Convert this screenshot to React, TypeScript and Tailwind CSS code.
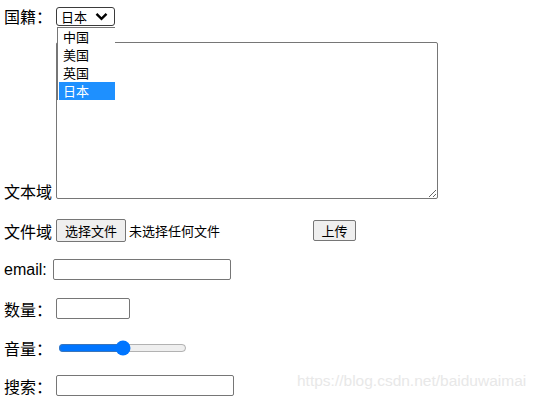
import { useState } from "react";

const font = "font-['Microsoft_YaHei','Noto_Sans_CJK_SC',sans-serif]";

export default function App() {
  const [volume, setVolume] = useState(50);
  const options = ["中国", "美国", "英国", "日本"];

  return (
    <div className={`relative min-h-[404px] overflow-hidden bg-white pl-[4px] pt-[7px] text-black ${font}`}>
      {/* 国籍 */}
      <div className="flex h-[19px] items-center">
        <span className="w-[48px] text-[16px] leading-[19px]">国籍：</span>
        <div className="ml-[4px] flex h-[19px] w-[59px] items-center justify-between rounded-[3px] border border-[#3b3b3b] pl-[4px] pr-[6px] text-[13px] leading-none">
          <span>日本</span>
          <svg width="13" height="9" viewBox="0 0 13 9">
            <path d="M1.5 1.8 L6.5 6.8 L11.5 1.8" fill="none" stroke="#000" strokeWidth="2.4" />
          </svg>
        </div>
      </div>

      {/* 文本域 */}
      <div className="mt-[16px] flex items-end">
        <span className="mb-[-2px] w-[48px] text-[16px] leading-[20px]">文本域</span>
        <textarea className="ml-[4px] block h-[157px] w-[382px] rounded-[2px] border border-[#767676] bg-white p-[2px] text-[13px]" />
      </div>

      {/* 文件域 */}
      <div className="mt-[20px] flex h-[23px] items-center">
        <span className="w-[48px] text-[16px] leading-[20px]">文件域</span>
        <button className="ml-[4px] h-[23px] w-[70px] rounded-[2px] border border-[#767676] bg-[#efefef] text-[13px] leading-none">
          选择文件
        </button>
        <span className="ml-[3px] w-[184px] text-[13px]">未选择任何文件</span>
        <button className="h-[21px] w-[43px] rounded-[2px] border border-[#767676] bg-[#efefef] text-[13px] leading-none">
          上传
        </button>
      </div>

      {/* email */}
      <div className="mt-[17px] flex h-[21px] items-center">
        <span className="w-[45px] font-['Liberation_Sans',sans-serif] text-[16px] leading-[20px]">email:</span>
        <input
          type="email"
          className="ml-[4px] h-[21px] w-[178px] rounded-[2px] border border-[#767676] px-[2px] text-[13px]"
        />
      </div>

      {/* 数量 */}
      <div className="mt-[18px] flex h-[21px] items-center">
        <span className="w-[48px] text-[16px] leading-[20px]">数量：</span>
        <input
          type="text"
          className="ml-[4px] h-[21px] w-[74px] rounded-[2px] border border-[#767676] px-[2px] text-[13px]"
        />
      </div>

      {/* 音量 */}
      <div className="mt-[18px] flex h-[21px] items-center">
        <span className="w-[48px] text-[16px] leading-[20px]">音量：</span>
        <input
          type="range"
          min={0}
          max={100}
          value={volume}
          onChange={(e) => setVolume(Number(e.target.value))}
          className="ml-[6px] w-[129px] accent-[#0075ff]"
        />
      </div>

      {/* 搜索 */}
      <div className="mt-[17px] flex h-[21px] items-center">
        <span className="w-[48px] text-[16px] leading-[20px]">搜索：</span>
        <input
          type="search"
          className="ml-[4px] h-[21px] w-[178px] rounded-[2px] border border-[#767676] px-[2px] text-[13px]"
        />
      </div>

      {/* open dropdown list */}
      <ul className="absolute left-[57px] top-[27px] w-[58px] border-l border-t border-[#767676] bg-white pl-[1px] text-[13px]">
        {options.map((o) => (
          <li
            key={o}
            className={`h-[18px] pl-[4px] leading-[18px] ${o === "日本" ? "bg-[#1e90ff] text-white" : ""}`}
          >
            {o}
          </li>
        ))}
      </ul>

      {/* watermark */}
      <span className="pointer-events-none absolute left-[297px] top-[369px] whitespace-nowrap font-['Liberation_Sans',sans-serif] text-[15.5px] text-[#e8e8e8]">
        https://blog.csdn.net/baiduwaimai
      </span>
    </div>
  );
}
